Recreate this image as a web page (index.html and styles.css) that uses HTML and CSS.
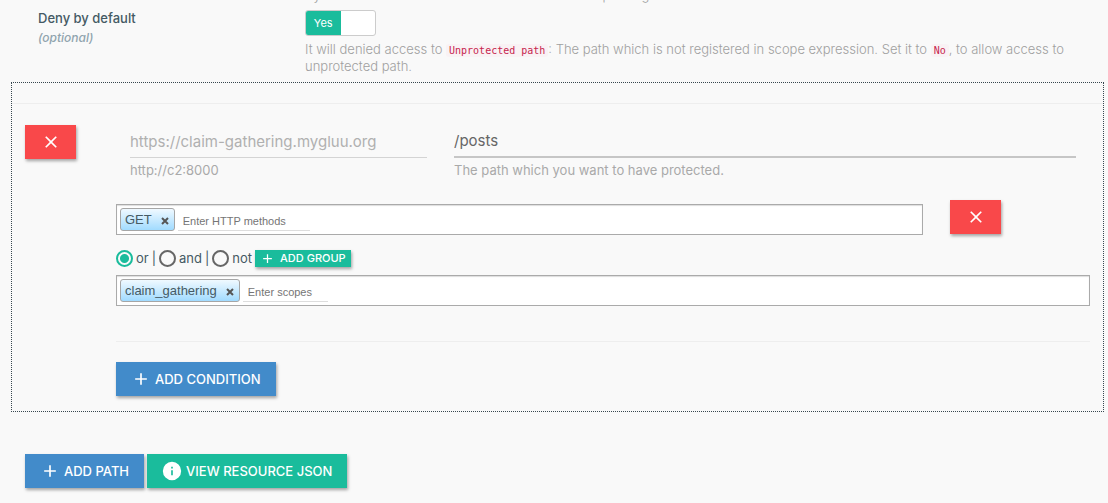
FILE: index.html
```html
<!DOCTYPE html>
<html lang="en">
<head>
<meta charset="utf-8">
<title>Scope expression</title>
<link rel="stylesheet" href="styles.css">
</head>
<body>
<svg class="sprite" aria-hidden="true">
  <symbol id="close" viewBox="0 0 24 24"><path d="M19 6.4 17.6 5 12 10.6 6.4 5 5 6.4 10.600 12 5 17.600 6.400 19 12 13.400 17.600 19 19 17.600 13.400 12z"/></symbol>
  <symbol id="plus" viewBox="0 0 24 24"><path d="M19 13h-6v6h-2v-6H5v-2h6V5h2v6h6z"/></symbol>
  <symbol id="info" viewBox="0 0 24 24"><path d="M12 1a11 11 0 1 0 0 22 11 11 0 0 0 0-22zm1 16h-2v-6h2zm0-8h-2V7h2z"/></symbol>
</svg>
<form class="page">
  <div class="previous-help"><p class="help">By default it will authenticate the client with each passing</p></div>
  <div class="setting">
    <label class="setting-label" for="deny">Deny by default <em>(optional)</em></label>
    <div class="setting-body">
      <span class="switch"><input type="checkbox" id="deny" checked><span class="switch-on">Yes</span></span>
      <p class="help">It will denied access to <code>Unprotected path</code>: The path which is not registered in scope expression. Set it to <code>No</code>, to allow access to unprotected path.</p>
    </div>
  </div>

  <section class="panel">
    <hr class="rule">
    <div class="path">
      <button type="button" class="btn btn-danger" aria-label="Remove path"><svg class="icon"><use href="#close"/></svg></button>
      <div class="path-body">
        <div class="fields">
          <div class="field">
            <input class="text-input" type="text" value="https://claim-gathering.mygluu.org" aria-label="Host" disabled>
            <p class="help">http://c2:8000</p>
          </div>
          <div class="field">
            <input class="text-input text-input-strong" type="text" value="/posts" aria-label="Path">
            <p class="help">The path which you want to have protected.</p>
          </div>
        </div>

        <div class="methods">
          <div class="tags">
            <span class="tag">GET <button type="button" class="tag-remove" aria-label="Remove GET"><svg class="tag-icon" viewBox="0 0 8 8"><path d="M1 1l6 6M7 1L1 7"/></svg></button></span>
            <input class="tag-input tag-input-wide" type="text" placeholder="Enter HTTP methods" aria-label="HTTP methods">
          </div>
          <button type="button" class="btn btn-danger" aria-label="Remove condition"><svg class="icon"><use href="#close"/></svg></button>
        </div>

        <div class="operators">
          <label class="choice"><input type="radio" name="op" checked>or</label><span class="bar">|</span>
          <label class="choice"><input type="radio" name="op">and</label><span class="bar">|</span>
          <label class="choice"><input type="radio" name="op">not</label>
          <button type="button" class="btn btn-success btn-small"><svg class="icon icon-small"><use href="#plus"/></svg>ADD GROUP</button>
        </div>

        <div class="tags">
          <span class="tag">claim_gathering <button type="button" class="tag-remove" aria-label="Remove claim_gathering"><svg class="tag-icon" viewBox="0 0 8 8"><path d="M1 1l6 6M7 1L1 7"/></svg></button></span>
          <input class="tag-input" type="text" placeholder="Enter scopes" aria-label="Scopes">
        </div>

        <hr class="rule rule-spaced">
        <button type="button" class="btn btn-primary"><svg class="icon"><use href="#plus"/></svg>ADD CONDITION</button>
      </div>
    </div>
  </section>

  <div class="actions">
    <button type="button" class="btn btn-primary"><svg class="icon"><use href="#plus"/></svg>ADD PATH</button>
    <button type="button" class="btn btn-success"><svg class="icon"><use href="#info"/></svg>VIEW RESOURCE JSON</button>
  </div>
</form>
</body>
</html>
```
FILE: styles.css
```css
* { box-sizing: border-box; }
body {
  margin: 0;
  background: #f9f9f9;
  color: #455a64;
  font: 13px/17px Inter, "Open Sans", sans-serif;
}
button, input { font: inherit; color: inherit; }
.sprite { display: none; }
.help { margin: 0; color: #a0a0a0; font-weight: 300; }
.field .help { color: #a9a9a9; font-weight: 400; }

.previous-help {
  display: flex;
  align-items: flex-end;
  height: 4px;
  margin: 0 33px 6px 305px;
  overflow: hidden;
}
.setting { display: grid; grid-template-columns: 267px 1fr; padding: 0 33px 0 38px; }
.setting-label { font-weight: 500; }
.setting-label em { display: block; margin-top: 2px; color: #90a4ae; font-size: 12px; }
.switch {
  position: relative;
  display: flex;
  width: 71px;
  height: 26px;
  margin-bottom: 5px;
  border: 1px solid #ccc;
  border-radius: 3px;
  background: #fff;
  overflow: hidden;
}
.switch input { position: absolute; inset: 0; width: 100%; height: 100%; margin: 0; opacity: 0; }
.switch-on {
  width: 50%;
  background: #1abc9c;
  color: #fff;
  font-size: 11px;
  line-height: 24px;
  text-align: center;
}
code {
  padding: 1px 3px;
  border-radius: 3px;
  background: #f9f2f4;
  color: #c7254e;
  font: 10px/12px "DejaVu Sans Mono", monospace;
}

.panel { margin: 7px 4px 0 11px; padding: 20px 0 15px; border: 1px dotted #37474f; }
.rule { height: 1px; margin: 0; border: 0; background: #eee; }
.path { display: grid; grid-template-columns: 91px 1fr; align-items: start; padding: 21px 13px 0; }
.fields { display: grid; grid-template-columns: 297fr 622fr; gap: 27px; padding: 0 14px; }
.text-input {
  display: block;
  width: 100%;
  height: 33px;
  margin-bottom: 4px;
  padding: 0;
  border: 0;
  border-bottom: 1px solid #d4d4d4;
  background: transparent;
  color: #b0b0b0;
  font-size: 15px;
}
.text-input-strong { border-bottom: 2px solid #c6c6c6; color: #666; }

.methods { display: grid; grid-template-columns: 807fr 140fr; gap: 27px; align-items: start; margin-top: 21px; }
.methods .tags { margin-top: 4px; }
.tags {
  display: flex;
  gap: 3px;
  padding: 3px;
  border: 1px solid #aaa;
  background: #fff;
  box-shadow: inset 0 1px 1px #ddd;
  font-family: "Liberation Sans", Arial, sans-serif;
}
.tag {
  display: flex;
  align-items: center;
  gap: 8px;
  height: 23px;
  padding: 0 4px;
  border: 1px solid #a6a6a6;
  border-radius: 3px;
  background: linear-gradient(#f0f9ff, #cbebff 47%, #a1dbff);
}
.tag-remove { display: flex; padding: 2px 1px 0; border: 0; background: none; }
.tag-icon { width: 8px; height: 8px; stroke: #555; stroke-width: 2; }
.tag-input {
  width: 85px;
  height: 23px;
  padding: 4px 5px 0;
  border: 0;
  border-bottom: 1px solid #ddd;
  background: none;
  font-size: 11px;
}
.tag-input-wide { width: 132px; }
.tag-input::placeholder { color: #757575; }

.operators { display: flex; align-items: center; gap: 3px; margin: 15px 0 8px; }
.choice { display: flex; align-items: center; gap: 3px; }
.choice input {
  appearance: none;
  width: 17px;
  height: 17px;
  margin: 0;
  border: 2px solid #666;
  border-radius: 50%;
}
.choice input:checked { border-color: #1abc9c; background: radial-gradient(#1abc9c 4px, transparent 5px); }

.btn {
  display: inline-flex;
  align-items: center;
  gap: 4px;
  height: 34px;
  padding: 0 15px;
  border: 0;
  color: #fff;
  font-weight: 500;
  box-shadow: 1px 2px 3px rgba(0, 0, 0, .35);
}
.btn-danger { justify-content: center; width: 51px; padding: 0; background: #f9484a; }
.btn-primary { background: #428bca; }
.btn-success { background: #1abc9c; }
.btn-small { gap: 5px; height: 17px; padding: 0 5px; font-size: 11px; }
.icon { flex: none; width: 20px; height: 20px; fill: currentColor; }
.icon-small { width: 15px; height: 15px; }
.rule-spaced { margin: 35px 0 20px; }
.actions { display: flex; gap: 3px; padding: 42px 25px 15px; }
```
